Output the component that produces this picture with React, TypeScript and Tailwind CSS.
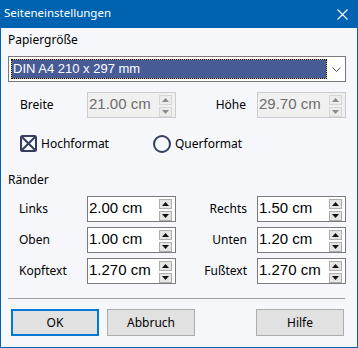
import React from "react";

const ui = { fontFamily: '"Noto Sans", "Open Sans", sans-serif' };
const arial = { fontFamily: '"Liberation Sans", Arial, sans-serif' };

function Tri({ up, disabled }: { up: boolean; disabled?: boolean }) {
  const c = disabled ? "#8a8a8a" : "#111111";
  return (
    <svg width="7" height="4" viewBox="0 0 7 4" className="block">
      {up ? <polygon points="0,4 7,4 3.5,0" fill={c} /> : <polygon points="0,0 7,0 3.5,4" fill={c} />}
    </svg>
  );
}

function Spin({ value, disabled }: { value: string; disabled?: boolean }) {
  const btn = disabled
    ? "w-[13px] h-[10px] border border-[#d6d6d6] bg-[#ececec] flex items-center justify-center"
    : "w-[13px] h-[10px] border border-[#adadad] bg-[#e5e5e5] flex items-center justify-center";
  return (
    <div
      className={
        disabled
          ? "w-[89px] h-[26px] border border-[#cccccc] bg-[#f0f0f0] flex"
          : "w-[89px] h-[26px] border border-[#7a7a7a] bg-white flex"
      }
    >
      <div
        className={
          disabled
            ? "flex-1 pl-[1px] text-[15px] leading-[22px] text-[#6d6d6d]"
            : "flex-1 pl-[1px] text-[15px] leading-[22px] text-black"
        }
        style={arial}
      >
        {value}
      </div>
      <div className="flex flex-col pt-[2px] pr-[3px] gap-[2px]">
        <div className={btn}>
          <Tri up disabled={disabled} />
        </div>
        <div className={btn}>
          <Tri up={false} disabled={disabled} />
        </div>
      </div>
    </div>
  );
}

function Btn({ label, primary }: { label: string; primary?: boolean }) {
  return (
    <div
      className={
        primary
          ? "w-[88px] h-[27px] border-2 border-[#0078d7] bg-[#e1e1e1] flex items-center justify-center text-[12px] text-black"
          : "w-[88px] h-[27px] border border-[#adadad] bg-[#e1e1e1] flex items-center justify-center text-[12px] text-black"
      }
      style={ui}
    >
      {label}
    </div>
  );
}

function Row({
  l,
  lv,
  r,
  rv,
}: {
  l: string;
  lv: string;
  r: string;
  rv: string;
}) {
  return (
    <div className="flex items-center h-[26px]">
      <div className="w-[79px] pl-[11px] text-[12px] leading-[16px] text-black" style={ui}>
        {l}
      </div>
      <Spin value={lv} />
      <div className="w-[81px] pr-[10px] text-right text-[12px] leading-[16px] text-black" style={ui}>
        {r}
      </div>
      <Spin value={rv} />
    </div>
  );
}

export default function App() {
  return (
    <div className="w-[358px] h-[348px] bg-[#0063b1] flex flex-col" style={ui}>
      <div className="h-[28px] flex items-start justify-between pl-[4px] pr-[10px] pt-[5px]">
        <span className="text-[11.5px] leading-[16px] text-white">Seiteneinstellungen</span>
        <svg width="11" height="11" viewBox="0 0 11 11" className="mt-[4px]">
          <path d="M0.5 0.5 L10.5 10.5 M10.5 0.5 L0.5 10.5" stroke="white" strokeWidth="1.1" />
        </svg>
      </div>
      <div className="flex-1 mx-px mb-px bg-[#f5f7fb] flex flex-col pl-[7px] pr-[11px] pt-[4px]">
        <div className="h-[16px] text-[12px] leading-[16px] text-black">Papiergröße</div>

        <div className="mt-[8px] h-[26px] border border-[#7a7a7a] bg-white flex p-[2px] pr-0">
          <div className="flex-1 border border-dotted border-black bg-[#d9b84c]">
            <div
              className="h-full bg-[#475c97] text-white text-[13px] leading-[18px] pl-[1px]"
              style={arial}
            >
              DIN A4 210 x 297 mm
            </div>
          </div>
          <div className="w-[18px] flex items-center justify-center">
            <svg width="9" height="5" viewBox="0 0 9 5">
              <path d="M0.5 0.5 L4.5 4.5 L8.5 0.5" stroke="#555" strokeWidth="1" fill="none" />
            </svg>
          </div>
        </div>

        <div className="mt-[10px] flex items-center h-[26px]">
          <div className="w-[79px] pl-[12px] text-[12px] leading-[16px] text-black">Breite</div>
          <Spin value="21.00 cm" disabled />
          <div className="w-[81px] pr-[11px] text-right text-[12px] leading-[16px] text-black">Höhe</div>
          <Spin value="29.70 cm" disabled />
        </div>

        <div className="mt-[17px] h-[17px] flex items-center">
          <div className="w-[145px] pl-[12px] flex items-center">
            <svg width="17" height="17" viewBox="0 0 17 17" className="shrink-0">
              <rect x="1" y="1" width="15" height="15" rx="1.5" stroke="#353e5f" strokeWidth="2" fill="none" />
              <path d="M2 2 L15 15 M15 2 L2 15" stroke="#353e5f" strokeWidth="2" />
            </svg>
            <span className="ml-[4px] text-[12px] leading-[16px] text-black">Hochformat</span>
          </div>
          <div className="flex items-center">
            <svg width="18" height="18" viewBox="0 0 18 18" className="shrink-0">
              <circle cx="9" cy="9" r="8" stroke="#353e5f" strokeWidth="2" fill="none" />
            </svg>
            <span className="ml-[4px] text-[12px] leading-[16px] text-black">Querformat</span>
          </div>
        </div>

        <div className="mt-[20px] h-[16px] text-[12px] leading-[16px] text-black">Ränder</div>

        <div className="mt-[8px] flex flex-col gap-[5px]">
          <Row l="Links" lv="2.00 cm" r="Rechts" rv="1.50 cm" />
          <Row l="Oben" lv="1.00 cm" r="Unten" rv="1.20 cm" />
          <Row l="Kopftext" lv="1.270 cm" r="Fußtext" rv="1.270 cm" />
        </div>

        <div className="mt-[14px] h-px bg-[#a0a0a0] mr-[1px]" />

        <div className="mt-[10px] flex pl-[3px] pr-[2px] gap-[8px]">
          <Btn label="OK" primary />
          <Btn label="Abbruch" />
          <div className="ml-auto">
            <Btn label="Hilfe" />
          </div>
        </div>
      </div>
    </div>
  );
}
